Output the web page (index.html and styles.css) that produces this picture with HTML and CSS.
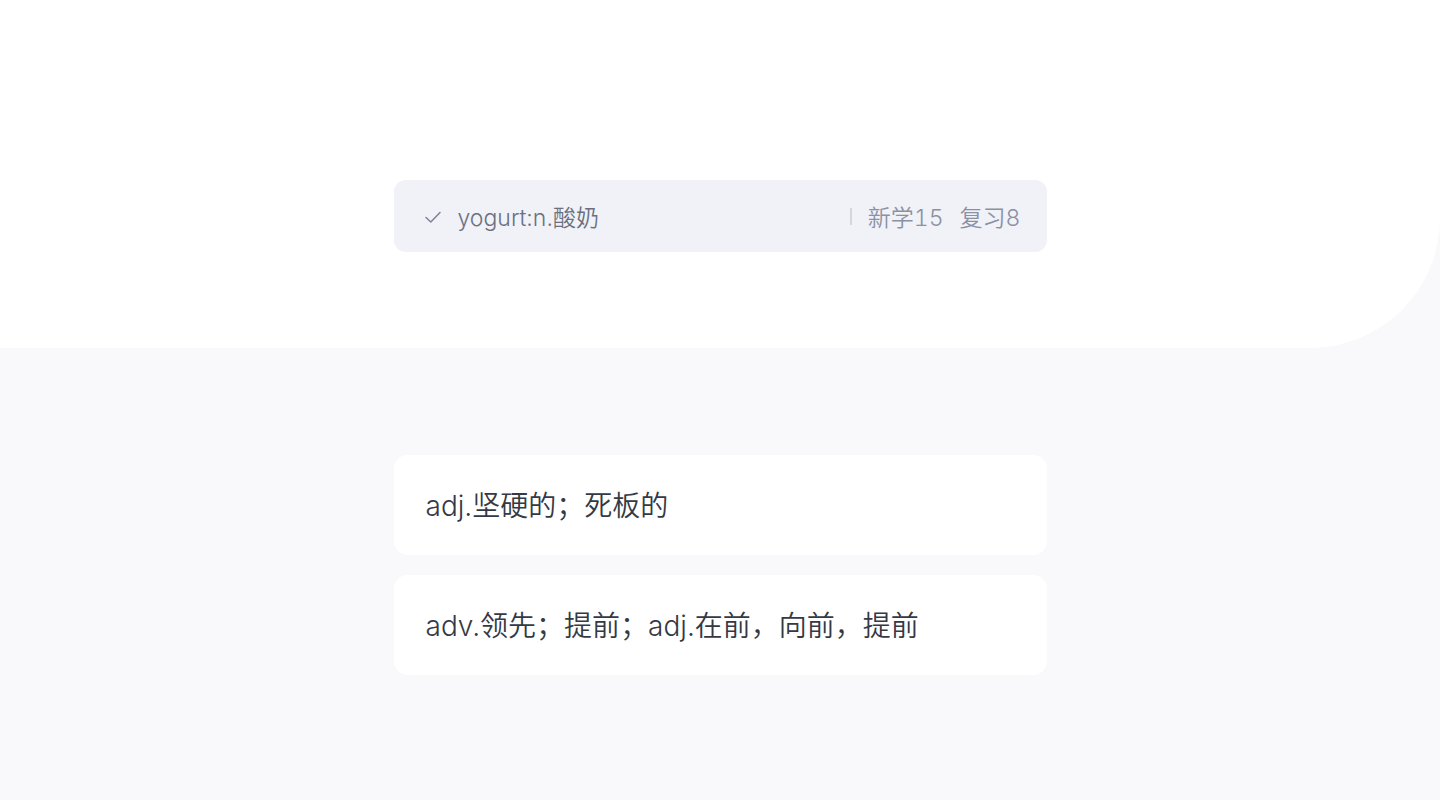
FILE: index.html
```html
<!DOCTYPE html>
<html lang="zh-CN">
<head>
  <meta charset="UTF-8" />
  <meta name="viewport" content="width=device-width, initial-scale=1.0" />
  <title>单词练习</title>
  <link rel="stylesheet" href="styles.css">
</head>
<body>
  <div class="top">
    <div class="status-bar">
      <div class="last-word">
        <svg class="check" width="18" height="18" viewBox="0 0 18 18">
          <path d="M2 9.5 L6.8 14 L16 4.5" fill="none" stroke="#7f8799" stroke-width="1.6" stroke-linecap="round" stroke-linejoin="round"/>
        </svg>
        <span>yogurt:n.酸奶</span>
      </div>
      <div class="counts">
        <span class="divider"></span>
        <span>新学15</span>
        <span>复习8</span>
      </div>
    </div>
  </div>

  <div class="options">
    <div class="option">adj.坚硬的；死板的</div>
    <div class="option">adv.领先；提前；adj.在前，向前，提前</div>
  </div>
</body>
</html>
```

FILE: styles.css
```css
body {
  margin: 0;
  height: 800px;
  background: #f9f9fb;
  font-family: Inter, 'Noto Sans CJK SC', sans-serif;
  font-weight: 350;
  overflow: hidden;
}

.top {
  height: 348px;
  box-sizing: border-box;
  padding-top: 180px;
  background: #fff;
  border-bottom-right-radius: 130px;
  display: flex;
  justify-content: center;
}

.status-bar {
  width: 653px;
  height: 72px;
  box-sizing: border-box;
  padding: 0 26px 0 32px;
  background: #f1f2f7;
  border-radius: 12px;
  display: flex;
  align-items: center;
  justify-content: space-between;
}

.last-word {
  display: flex;
  align-items: center;
  gap: 16px;
  font-size: 23px;
  color: #6b7080;
}

.check {
  margin-left: -2px;
  margin-top: 1px;
}

.counts {
  display: flex;
  align-items: center;
  gap: 16px;
  font-size: 23px;
  font-variant-numeric: tabular-nums;
  color: #8a91a5;
}

.divider {
  width: 2px;
  height: 17px;
  background: #d3d6de;
}

.options {
  padding-top: 107px;
  display: flex;
  flex-direction: column;
  align-items: center;
  gap: 20px;
}

.option {
  width: 653px;
  height: 100px;
  box-sizing: border-box;
  padding: 0 32px 3px;
  background: #fff;
  border-radius: 14px;
  display: flex;
  align-items: center;
  font-size: 28px;
  color: #343945;
}
```
